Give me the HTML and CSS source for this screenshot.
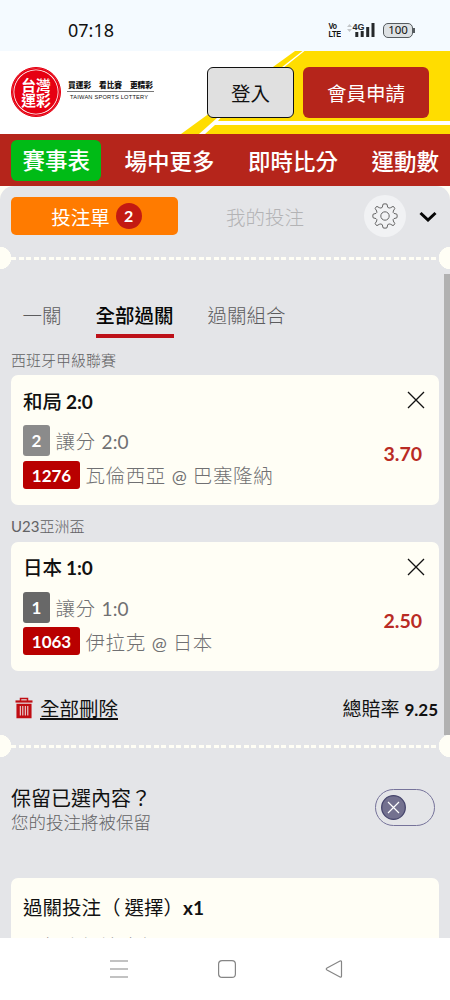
FILE: index.html
```html
<!DOCTYPE html>
<html lang="zh-Hant">
<head>
<meta charset="utf-8">
<title>台灣運彩</title>
<link rel="stylesheet" href="styles.css">
</head>
<body>
<div class="phone">
  <div class="status">
    <span class="clock">07:18</span>
    <div class="status-icons">
      <span class="volte">Vo<br>LTE</span>
      <svg class="signal" width="30" height="18" viewBox="0 0 30 18"><path d="M1 6l2.500-3 2.500 3zM1 8l2.500 3 2.500-3z" fill="#c3c6c9"/><text x="6.500" y="8.500" class="net" textLength="12" lengthAdjust="spacingAndGlyphs">4G</text><path d="M9.300 11h3v5h-3zM14.700 10h3v6h-3zM20.200 6h3v10h-3zM25.500 2h3v14h-3z" fill="#25282b"/></svg>
      <span class="battery">100</span>
    </div>
  </div>
  <header class="header">
    <svg class="stripes" width="290" height="83" viewBox="0 0 290 83"><path d="M135 0H290V83H21z" fill="#ffdd00"/><path d="M142.500 0H144.500L60 67.500L58 70H290V74H55L45 83H39L57 67z" fill="#fff"/></svg>
    <div class="brand">
      <div class="seal"><span>台灣</span><span>運彩</span></div>
      <div class="slogan"><div class="slogan-zh"><span>買運彩</span><span>看比賽</span><span>更精彩</span></div><div class="slogan-en">TAIWAN SPORTS LOTTERY</div></div>
    </div>
    <div class="btn login">登入</div>
    <div class="btn join">會員申請</div>
  </header>
  <nav class="nav"><span class="active">賽事表</span><span>場中更多</span><span>即時比分</span><span>運動數</span></nav>
  <main class="body">
    <div class="panel">
      <div class="slip-head">
        <div class="slip-tab">投注單<b>2</b></div>
        <div class="my-bets">我的投注</div>
        <div class="gear"><svg width="26" height="26" viewBox="0 0 26 26" fill="none" stroke="#666" stroke-width="1"><circle cx="13" cy="13" r="4.200"/><path d="M11 1.200Q13 .4 15 1.200L15.700 4.300Q17 5.600 18.700 4.700L21 3.400Q22.500 4 22.800 5.500L21.300 8Q20.700 9.800 22 10.400L24.900 11.200Q25.500 13 24.900 14.800L22 15.600Q20.700 16.200 21.300 18L22.800 20.500Q22.500 22 21 22.600L18.700 21.300Q17 20.400 15.700 21.700L15 24.800Q13 25.600 11 24.800L10.300 21.700Q9 20.400 7.300 21.300L5 22.600Q3.500 22 3.200 20.500L4.700 18Q5.300 16.200 4 15.600L1.100 14.800Q.5 13 1.100 11.200L4 10.400Q5.300 9.800 4.700 8L3.200 5.500Q3.500 4 5 3.400L7.300 4.700Q9 5.600 10.300 4.300z" stroke-linejoin="round"/></svg></div>
        <svg class="chev" width="18" height="12" viewBox="0 0 18 12"><path d="M1.500 3l7.500 7 7.500-7" fill="none" stroke="#050505" stroke-width="3"/></svg>
      </div>
      <div class="perf"></div>
      <div class="scrollbar"></div>
      <div class="modes"><span>一關</span><span class="on">全部過關</span><span>過關組合</span></div>
      <div class="league">西班牙甲級聯賽</div>
      <section class="card">
        <div class="pick"><span>和局 <b>2:0</b></span><svg class="close" width="18" height="18" viewBox="0 0 18 18"><path d="M1 1l16 16M17 1L1 17"/></svg></div>
        <div class="detail">
          <div><div class="line"><b class="no light">2</b><span>讓分 <i>2:0</i></span></div><div class="line"><b class="code">1276</b><span>瓦倫西亞 <i class="at">@</i> 巴塞隆納</span></div></div>
          <div class="odds">3.70</div>
        </div>
      </section>
      <div class="league second"><i>U23</i>亞洲盃</div>
      <section class="card">
        <div class="pick"><span>日本 <b>1:0</b></span><svg class="close" width="18" height="18" viewBox="0 0 18 18"><path d="M1 1l16 16M17 1L1 17"/></svg></div>
        <div class="detail">
          <div><div class="line"><b class="no">1</b><span>讓分 <i>1:0</i></span></div><div class="line"><b class="code">1063</b><span>伊拉克 <i class="at">@</i> 日本</span></div></div>
          <div class="odds">2.50</div>
        </div>
      </section>
      <div class="summary">
        <svg width="18" height="22" viewBox="0 0 18 22" fill="none" stroke="#c00c12"><path d="M5.500 4V1.500h7V4" stroke-width="1.500"/><path d="M.5 4.500h17" stroke-width="2.200"/><path d="M2.200 7.500h13.600v13h-13.600z" fill="#c00c12" stroke-width="1.500"/><path d="M5.300 9v9.500M7.800 9v9.500M10.300 9v9.500M12.800 9v9.500" stroke="#eee" stroke-width="1"/></svg>
        <span class="clear">全部刪除</span><span class="total">總賠率 <b>9.25</b></span>
      </div>
      <div class="perf"></div>
      <div class="keep"><div><div class="keep-title">保留已選內容？</div><div class="keep-sub">您的投注將被保留</div></div>
        <div class="toggle"><svg width="25" height="25" viewBox="0 0 25 25"><circle cx="12.500" cy="12.500" r="11.800" fill="#73718f" stroke="#45446b" stroke-width="1.300"/><path d="M7 7l11 11M18 7L7 18" stroke="#fff" stroke-width="1.200"/></svg></div>
      </div>
      <section class="card stake"><div class="stake-title">過關投注（<span class="gap"></span>選擇）<b>x1</b></div><div class="stake-sub">1 組合投注金額</div></section>
    </div>
  </main>
  <footer class="sysnav">
    <svg width="18" height="20" viewBox="0 0 18 20"><path d="M0 2h18M0 10h18M0 18h18"/></svg>
    <svg width="18" height="18" viewBox="0 0 18 18"><rect x=".6" y=".6" width="16.800" height="16.800" rx="3.500"/></svg>
    <svg width="18" height="18" viewBox="0 0 18 18"><path d="M2 8L15 1q1.500-.5 1.500 1v14q0 1.500-1.500 1L2 10q-1.500-1 0-2z"/></svg>
  </footer>
</div>
</body>
</html>
```
FILE: styles.css
```css
* { box-sizing: border-box; }
body { margin: 0; font-family: Lato, "Noto Sans CJK TC", sans-serif; font-size: 19.5px; color: #111; }
b { font-weight: 700; }
i { font-style: normal; font-weight: 400; }
.phone { width: 450px; height: 1000px; display: flex; flex-direction: column; overflow: hidden; background: #fff; }
.status { height: 51px; flex: none; background: #f4faff; display: flex; align-items: center; justify-content: space-between; padding: 9px 37px 0 68px; }
.clock { font: 18px/20px "Noto Sans", sans-serif; }
.status-icons { display: flex; align-items: center; }
.volte { font: bold 9.500px/8px "Liberation Sans", sans-serif; transform: scale(.78, 1); transform-origin: right; letter-spacing: -.5px; margin-right: -1px; }
.signal { margin-left: 6px; }
.net { font: bold 9.500px "Liberation Sans", sans-serif; fill: #25282b; }
.battery { position: relative; width: 30px; height: 15px; margin-left: 7px; border: 1.5px solid #555b5f; border-radius: 5px; background: #dde1e4; font: 11.500px/12px "Noto Sans", sans-serif; text-align: center; }
.battery::after { content: ""; position: absolute; right: -3px; top: 4px; width: 2px; height: 5px; background: #555b5f; }
.header { position: relative; height: 83px; flex: none; display: flex; align-items: flex-start; padding: 15.500px 0 0 11px; }
.stripes { position: absolute; right: 0; top: 0; }
.brand { position: relative; display: flex; width: 196px; }
.seal { width: 50px; height: 50px; border-radius: 50%; background: #e60012; border: 1px solid #e60012; box-shadow: inset 0 0 0 1.500px #e60012, inset 0 0 0 2.300px #fff; color: #fff; font-family: "Noto Sans CJK TC", sans-serif; font-size: 14.800px; line-height: 15px; font-weight: 700; display: flex; flex-direction: column; align-items: center; justify-content: center; }
.slogan { margin: 12px 0 0 6px; width: 87px; }
.slogan-zh { display: flex; justify-content: space-between; font-size: 7.700px; line-height: 12px; height: 13px; font-weight: 900; border-bottom: 1px solid #777; padding: 0 1px; }
.slogan-en { font: 5.700px/9px "Liberation Sans", sans-serif; letter-spacing: .2px; white-space: nowrap; padding: 1px 3px; }
.btn { position: relative; height: 51.500px; border-radius: 6px; display: flex; align-items: center; justify-content: center; font-size: 19.500px; }
.login { width: 87px; border: 1.500px solid #111; background: #e0e0e0; }
.join { width: 126px; margin-left: 9px; background: #b5251b; color: #fff; }
.nav { height: 52px; flex: none; background: #b5251b; color: #fff; font-size: 22.500px; font-weight: 500; white-space: nowrap; display: flex; align-items: center; gap: 33.500px; padding-left: 11px; overflow: hidden; }
.nav .active { height: 41px; line-height: 41px; padding: 0 11px 0 11.500px; margin-right: -10px; border-radius: 6px; background: #00bb16; }
.body { height: 752px; flex: none; overflow: hidden; background: #fffef5; }
.panel { position: relative; height: 752px; background: #e4e5e8; border-radius: 14px 14px 0 0; overflow: hidden; }
.slip-head { height: 60px; display: flex; align-items: center; padding-left: 11px; }
.slip-tab { display: flex; align-items: center; justify-content: center; width: 167px; height: 38px; border-radius: 5px; background: #ff7b00; color: #fff; gap: 6px; padding-left: 4px; }
.slip-tab b { width: 26px; height: 26px; border-radius: 50%; background: #c31a12; font-size: 16px; line-height: 26px; text-align: center; }
.my-bets { margin-left: 48px; width: 138px; color: #b3b3b5; font-weight: 300; }
.gear { width: 42px; height: 42px; border-radius: 50%; background: #f1f2f4; display: flex; align-items: center; justify-content: center; }
.chev { margin-left: 13px; }
.perf { position: relative; height: 24px; margin: 0 -11px; background: radial-gradient(circle at 11px 12px, #fffef5 11px, transparent 11.500px), radial-gradient(circle at calc(100% - 11px) 12px, #fffef5 11px, transparent 11.500px), repeating-linear-gradient(90deg, #fffef5 0 5px, transparent 5px 7.500px) 22px 11px / calc(100% - 44px) 3px no-repeat; }
.scrollbar { position: absolute; right: 0; top: 88px; width: 6px; height: 461px; background: #b1b1b1; }
.modes { display: flex; gap: 34px; height: 68px; padding: 28px 0 0 22.500px; color: #5c5c5e; font-weight: 300; line-height: 36px; }
.modes span { height: 40px; }
.modes .on { color: #050505; font-weight: 500; border-bottom: 4px solid #bd1018; }
.league { height: 37px; padding: 12px 0 0 11px; font-size: 15px; line-height: 20px; color: #626264; font-weight: 300; }
.card { width: 428px; height: 129.500px; margin-left: 11px; border-radius: 7px; background: #fffef5; padding: 13px 12px 0; }
.pick { display: flex; align-items: center; justify-content: space-between; height: 24px; font-weight: 500; padding-right: 2px; }
.pick b { font-size: 19px; margin-left: -1px; }
.close { stroke: #111; stroke-width: 1.300; }
.detail { display: flex; justify-content: space-between; padding-top: 11.500px; }
.line { display: flex; align-items: center; gap: 5.500px; height: 34px; color: #707072; font-weight: 300; letter-spacing: .6px; }
.line b { color: #fff; font-size: 17px; letter-spacing: 0; text-align: center; border-radius: 3px; }
.line i { font-size: 19px; letter-spacing: .1px; }
.line .at { font-size: 18px; }
.no { width: 27px; height: 31px; line-height: 32px; background: #686868; }
.line .light { background: #8b8b8b; }
.code { width: 57px; height: 28px; line-height: 29px; background: #b90000; }
.odds { padding: 17.500px 5px 0 0; line-height: 25px; color: #b92b24; font-size: 19.500px; font-weight: 700; }
.second { height: 37px; padding-top: 11.500px; }
.summary { display: flex; align-items: center; height: 63px; padding: 10px 12px 0 15px; gap: 7px; }
.clear { text-decoration: underline; text-decoration-thickness: 1.500px; text-underline-offset: 2px; text-decoration-skip-ink: none; }
.total { margin-left: auto; font-size: 19px; }
.total b { font-size: 17px; }
.keep { display: flex; justify-content: space-between; height: 120px; padding: 26px 15px 0 11px; }
.keep-title { font-size: 20px; line-height: 28px; }
.keep-sub { font-size: 17.500px; line-height: 21px; color: #626264; font-weight: 300; }
.toggle { width: 60px; height: 37px; margin-top: 5px; border: 1.500px solid #76739a; border-radius: 19px; padding: 4.500px; }
.toggle svg { display: block; }
.stake { height: 80px; }
.stake-title { line-height: 34px; white-space: nowrap; }
.stake-title b { font-size: 19px; }
.gap { display: inline-block; width: 4px; }
.stake-sub { padding: 8px 0 0 3px; line-height: 27px; font-weight: 300; color: #68686a; }
.sysnav { height: 62px; display: flex; align-items: center; justify-content: space-between; padding: 0 107px 0 110px; }
.sysnav svg { fill: none; stroke: #858585; stroke-width: 1.200; }
```
